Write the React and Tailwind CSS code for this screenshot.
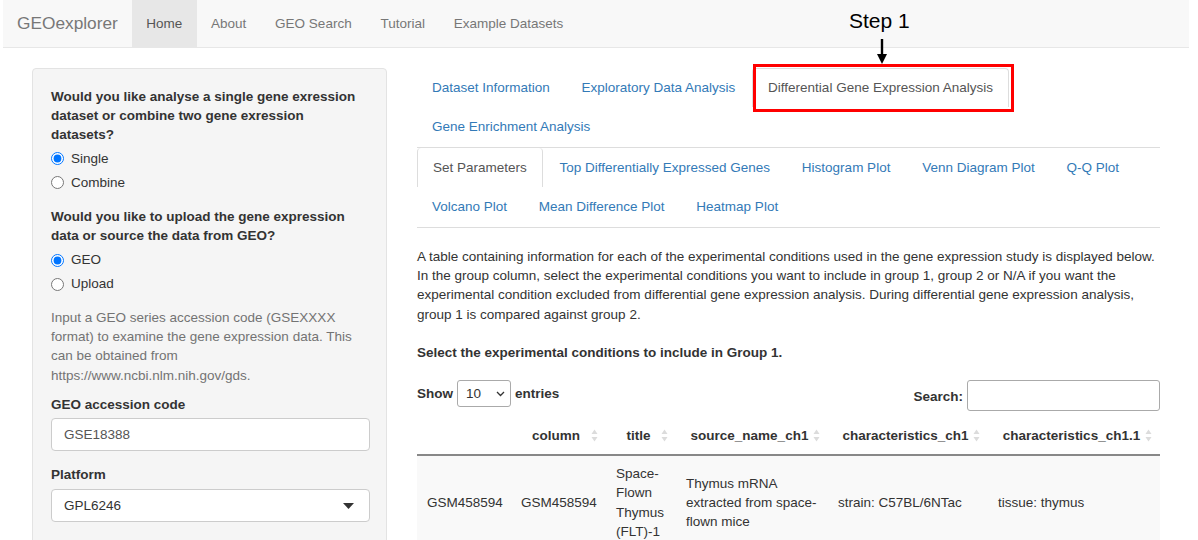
import React from "react";

const NAV = ["About", "GEO Search", "Tutorial", "Example Datasets"];

function SortIcon() {
  return (
    <svg width="7" height="13" viewBox="0 0 7 13" className="shrink-0">
      <path d="M3.5 0.5 L6.5 5 L0.5 5 Z" fill="#dcdcdc" />
      <path d="M3.5 12.5 L6.5 8 L0.5 8 Z" fill="#dcdcdc" />
    </svg>
  );
}

function Radio({ checked, label }) {
  return (
    <label className="flex items-center h-[24px]">
      <input type="radio" checked={checked} readOnly className="w-[13px] h-[13px] m-0 accent-[#0075ff]" />
      <span className="ml-[7px]">{label}</span>
    </label>
  );
}

function Th({ children, w, first }) {
  return (
    <th className={`${w} font-bold text-[#333] py-[9px] pl-[10px] pr-[8px] border-b-2 border-[#888]`}>
      {first ? null : (
        <div className="flex items-center">
          <span className="flex-1 text-center">{children}</span>
          <SortIcon />
        </div>
      )}
    </th>
  );
}

const tab = "mr-[2px] px-[14.9px] flex items-center";

export default function App() {
  return (
    <div className="relative w-[1198px] h-[540px] overflow-hidden bg-white text-[#333] text-[13.5px] leading-[19.2px]" style={{ fontFamily: '"Liberation Sans", Arial, sans-serif' }}>
      {/* navbar */}
      <div className="mx-[3px] w-[1186px] h-[48px] bg-[#f8f8f8] border-b border-[#e7e7e7] flex items-stretch">
        <div className="pl-[14px] pr-[14px] flex items-center text-[17.3px] text-[#777]">GEOexplorer</div>
        <div className="px-[14.4px] flex items-center bg-[#e7e7e7] text-[#555]">Home</div>
        {NAV.map(n => (
          <div key={n} className="px-[14.4px] flex items-center text-[#777]">{n}</div>
        ))}
      </div>

      <div className="flex pt-[20px]">
        {/* sidebar */}
        <div className="ml-[32px] w-[355px] shrink-0">
          <div className="bg-[#f5f5f5] border border-[#e3e3e3] rounded-[4px] pt-[18px] px-[18px] pb-[18px] h-[520px]">
            <div className="font-bold">Would you like analyse a single gene exression dataset or combine two gene exression datasets?</div>
            <div className="mt-[2px]">
              <Radio checked label="Single" />
              <Radio label="Combine" />
            </div>
            <div className="font-bold mt-[12px]">Would you like to upload the gene expression data or source the data from GEO?</div>
            <div className="mt-[3px]">
              <Radio checked label="GEO" />
              <Radio label="Upload" />
            </div>
            <p className="text-[#737373] mt-[12px] pr-[10px]">Input a GEO series accession code (GSEXXXX format) to examine the gene expression data. This can be obtained from https://www.ncbi.nlm.nih.gov/gds.</p>
            <div className="font-bold mt-[10px]">GEO accession code</div>
            <div className="mt-[4px] w-[319px] h-[33px] bg-white border border-[#ccc] rounded-[4px] flex items-center px-[12px] text-[#555]">GSE18388</div>
            <div className="font-bold mt-[14px]">Platform</div>
            <div className="mt-[5px] w-[319px] h-[33px] bg-white border border-[#ccc] rounded-[4px] flex items-center pl-[12px] pr-[15px] text-[#333]">
              <span className="flex-1">GPL6246</span>
              <svg width="11" height="6" viewBox="0 0 11 6"><path d="M0 0 L11 0 L5.5 6 Z" fill="#333" /></svg>
            </div>
          </div>
        </div>

        {/* main */}
        <div className="ml-[30px] w-[743px] shrink-0">
          {/* outer tabs */}
          <div className="border-b border-[#ddd] flex flex-wrap">
            <div className={`${tab} h-[39px] text-[#337ab7]`}>Dataset Information</div>
            <div className={`${tab} h-[39px] text-[#337ab7]`}>Exploratory Data Analysis</div>
            <div className={`${tab} h-[39px] text-[#555] bg-white border border-b-0 border-[#ddd] rounded-t-[4px]`}>Differential Gene Expression Analysis</div>
            <div className="w-full" />
            <div className={`${tab} h-[40px] text-[#337ab7]`}>Gene Enrichment Analysis</div>
          </div>
          {/* inner tabs */}
          <div className="border-b border-[#ddd] flex flex-wrap">
            <div className={`${tab} h-[39px] text-[#555] bg-white border-x border-[#ddd] rounded-t-[4px]`}>Set Parameters</div>
            <div className={`${tab} h-[39px] text-[#337ab7]`}>Top Differentially Expressed Genes</div>
            <div className={`${tab} h-[39px] text-[#337ab7]`}>Histogram Plot</div>
            <div className={`${tab} h-[39px] text-[#337ab7]`}>Venn Diagram Plot</div>
            <div className={`${tab} h-[39px] text-[#337ab7]`}>Q-Q Plot</div>
            <div className="w-full" />
            <div className={`${tab} h-[40px] text-[#337ab7]`}>Volcano Plot</div>
            <div className={`${tab} h-[40px] text-[#337ab7]`}>Mean Difference Plot</div>
            <div className={`${tab} h-[40px] text-[#337ab7]`}>Heatmap Plot</div>
          </div>

          <p className="mt-[19px] pr-[4px]">A table containing information for each of the experimental conditions used in the gene expression study is displayed below. In the group column, select the experimental conditions you want to include in group 1, group 2 or N/A if you want the experimental condition excluded from differential gene expression analysis. During differential gene expression analysis, group 1 is compared against group 2.</p>
          <p className="mt-[19px] font-bold">Select the experimental conditions to include in Group 1.</p>

          {/* datatable controls */}
          <div className="mt-[18px] flex items-start">
            <div className="flex items-center font-bold h-[27px]">
              <span>Show</span>
              <div className="mx-[4px] w-[54px] h-[27px] border border-[#aaa] rounded-[3px] bg-white flex items-center pl-[8px] pr-[5px] font-normal">
                <span className="flex-1">10</span>
                <svg width="9" height="6" viewBox="0 0 9 6"><path d="M1 1 L4.5 4.5 L8 1" stroke="#333" strokeWidth="1.3" fill="none" /></svg>
              </div>
              <span>entries</span>
            </div>
            <div className="ml-auto flex items-center font-bold">
              <span className="mt-[2px]">Search:</span>
              <div className="ml-[4px] w-[193px] h-[31px] border border-[#aaa] rounded-[3px] bg-white" />
            </div>
          </div>

          <table className="mt-[6px] w-[743px] table-fixed border-collapse">
            <thead>
              <tr>
                <Th w="w-[94px]" first />
                <Th w="w-[95px]">column</Th>
                <Th w="w-[70px]">title</Th>
                <Th w="w-[152px]">source_name_ch1</Th>
                <Th w="w-[160px]">characteristics_ch1</Th>
                <Th w="w-[172px]">characteristics_ch1.1</Th>
              </tr>
            </thead>
            <tbody>
              <tr className="bg-[#f9f9f9] align-middle">
                <td className="px-[10px] py-[8px]">GSM458594</td>
                <td className="px-[10px] py-[8px]">GSM458594</td>
                <td className="px-[10px] py-[8px]">Space-Flown Thymus (FLT)-1</td>
                <td className="px-[10px] py-[8px]">Thymus mRNA extracted from space-flown mice</td>
                <td className="px-[10px] py-[8px]">strain: C57BL/6NTac</td>
                <td className="px-[10px] py-[8px]">tissue: thymus</td>
              </tr>
            </tbody>
          </table>
        </div>
      </div>

      {/* annotation overlay */}
      <div className="absolute left-[849px] top-[8px] text-[21px] leading-[26px] text-black">Step 1</div>
      <svg className="absolute left-[876px] top-[39px]" width="12" height="26" viewBox="0 0 12 26">
        <line x1="6" y1="0" x2="6" y2="17" stroke="#000" strokeWidth="2.4" />
        <path d="M1 15 L11 15 L6 25 Z" fill="#000" />
      </svg>
      <div className="absolute left-[753px] top-[64px] w-[261px] h-[48px] border-[3px] border-[#ff0000]" />
    </div>
  );
}
